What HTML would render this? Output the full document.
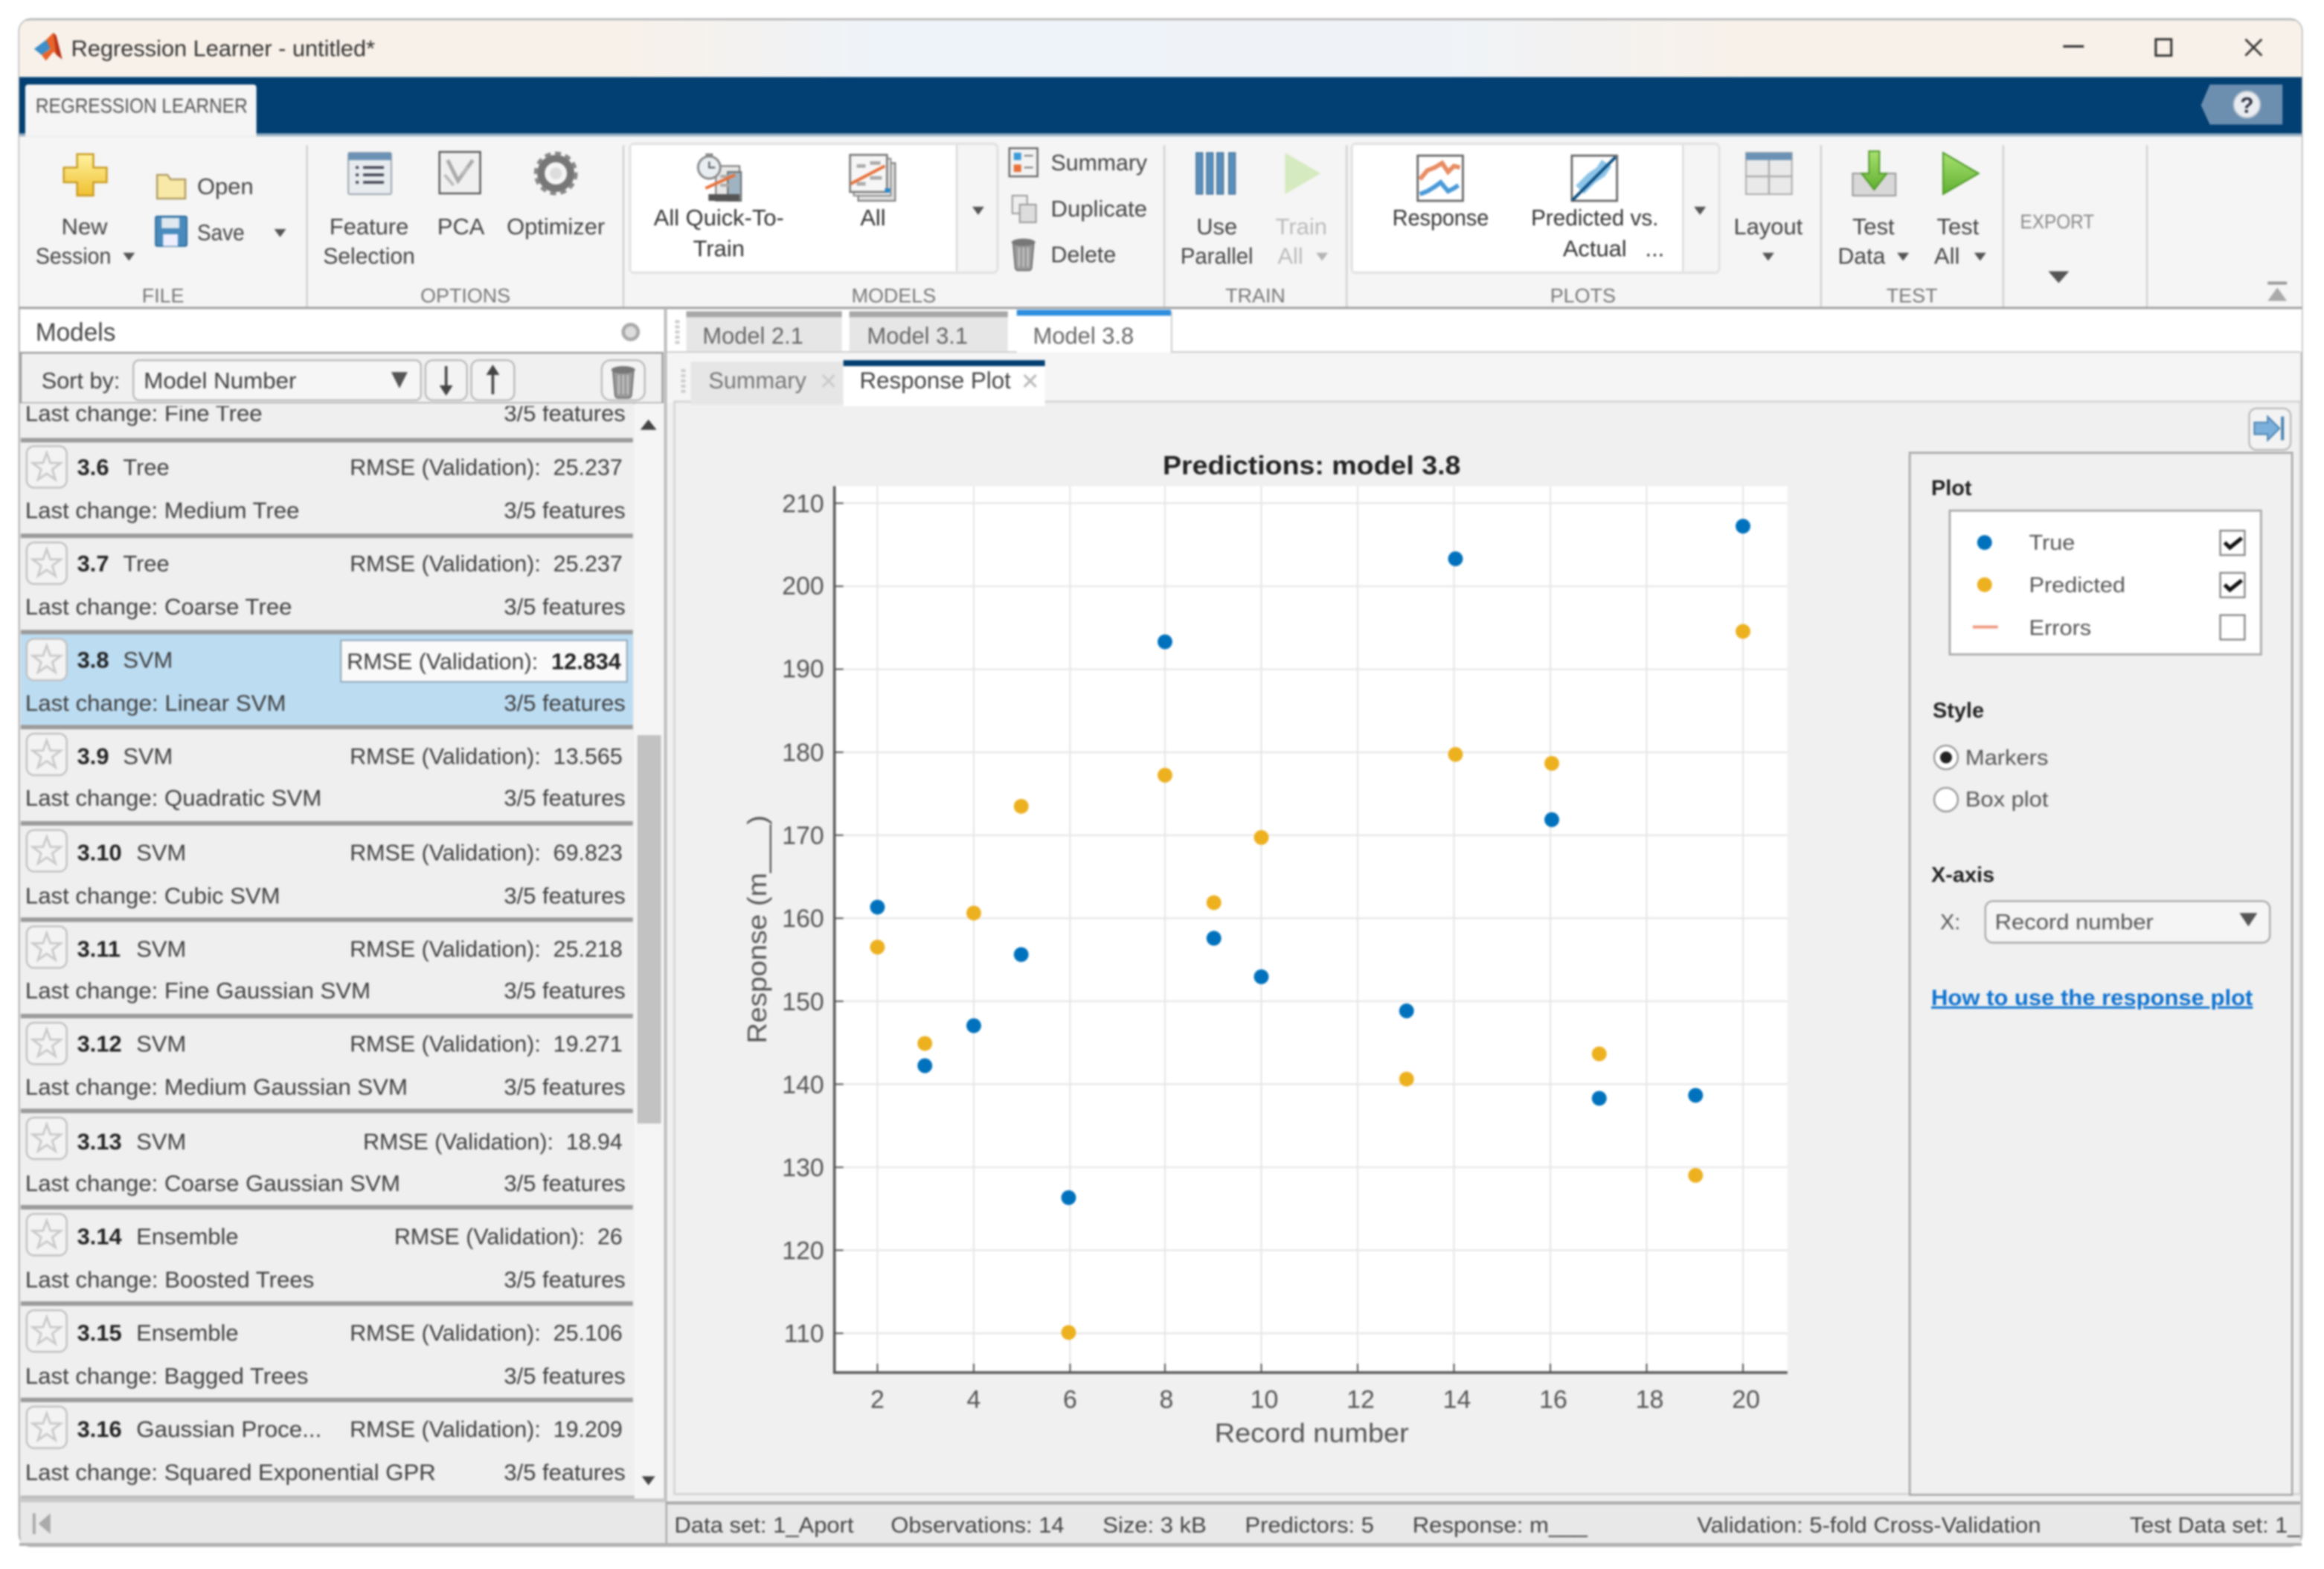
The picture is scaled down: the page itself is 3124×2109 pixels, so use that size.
<!DOCTYPE html>
<html><head><meta charset="utf-8"><title>Regression Learner</title>
<style>
html,body{margin:0;padding:0;background:#fff;width:3124px;height:2109px;overflow:hidden}
svg{display:block;filter:blur(1.2px)}
text{font-family:"Liberation Sans",sans-serif;fill:#3f3f3f;font-size:15.5px;white-space:pre}
.rb{font-size:15.5px;fill:#444}
.sec{font-size:13.5px;fill:#777}
.m{text-anchor:middle}
.e{text-anchor:end}
.b{font-weight:bold;fill:#222}
.ax{font-size:17px;fill:#555}
.st{font-size:15px;fill:#444}
.rp{font-size:14.5px;fill:#555}
.tab{font-size:16px;fill:#666}
</style></head><body>
<svg width="3124" height="2109" viewBox="0 0 1568 1058.56" xmlns="http://www.w3.org/2000/svg">
<defs>
<linearGradient id="tg" x1="0" x2="1" y1="0" y2="0"><stop offset="0" stop-color="#f8f1e9"/><stop offset=".26" stop-color="#f8f1e9"/><stop offset=".38" stop-color="#eef3f9"/><stop offset=".62" stop-color="#eff3f8"/><stop offset=".76" stop-color="#f8f1e9"/><stop offset="1" stop-color="#f8f1e9"/></linearGradient>
<linearGradient id="gold" x1="0" x2="0" y1="0" y2="1"><stop offset="0" stop-color="#fff2a0"/><stop offset="1" stop-color="#f0c030"/></linearGradient>
<linearGradient id="grn" x1="0" x2="0" y1="0" y2="1"><stop offset="0" stop-color="#a8e070"/><stop offset="1" stop-color="#60b030"/></linearGradient>
<g id="star"><rect x="18" y="5" width="27" height="28" rx="5" fill="#f3f3f3" stroke="#c0c0c0" stroke-width="1.2"/><polygon transform="translate(31.5,19.5)" points="0,-10 2.4,-3.2 9.5,-3.1 3.8,1.2 5.9,8.1 0,4 -5.9,8.1 -3.8,1.2 -9.5,-3.1 -2.4,-3.2" fill="none" stroke="#c8c8c8" stroke-width="1.4"/></g>
<polygon id="ar" points="-4,-2.5 4,-2.5 0,3" fill="#555"/>
<g id="can"><path d="M-7,-6 h14 l-1.5,17 a2,2 0 0 1 -2,1.5 h-7 a2,2 0 0 1 -2,-1.5 z" fill="#999" stroke="#666" stroke-width=".8"/><ellipse cx="0" cy="-6.5" rx="8" ry="2.5" fill="#777"/><path d="M-3,-3 v13 M0,-3 v13 M3,-3 v13" stroke="#ccc" stroke-width="1"/></g>
<clipPath id="lc"><rect x="13" y="274" width="415" height="736"/></clipPath>
<clipPath id="wc"><rect x="13" y="13" width="1540" height="1030" rx="8"/></clipPath>
<clipPath id="sc"><rect x="450" y="1013" width="1102" height="29"/></clipPath>
</defs>

<!-- window -->
<rect x="13" y="13" width="1540" height="1030" rx="8" fill="#f0f0f0" stroke="#bbb" stroke-width="1.5"/>
<g clip-path="url(#wc)">
<rect x="13" y="14" width="1540" height="38" fill="url(#tg)"/>
<rect x="13" y="52" width="1540" height="40" fill="#023f72"/>
<rect x="13" y="90" width="1540" height="2" fill="#9ab0c4"/>
<rect x="13" y="92" width="1540" height="115" fill="#f5f5f5"/>
<rect x="13" y="207" width="1540" height="1.6" fill="#a0a0a0"/>
</g>

<!-- title -->
<polygon points="23,33 31,27 35,32 28,37" fill="#3d8ec9"/>
<polygon points="31,27 36,22 42,40 36,35 31,41 28,37 34,33" fill="#e9642a"/>
<polygon points="36,22 38,24 42,40 38,37" fill="#b8341c"/>
<text x="48" y="38" textLength="205" lengthAdjust="spacingAndGlyphs" style="font-size:15.5px;fill:#333">Regression Learner - untitled*</text>
<rect x="1392" y="30.5" width="14" height="1.6" fill="#333"/>
<rect x="1454.5" y="26.5" width="10.5" height="11" fill="none" stroke="#333" stroke-width="1.5"/>
<path d="M1515,26.5 L1526,37.5 M1526,26.5 L1515,37.5" stroke="#333" stroke-width="1.4"/>

<!-- top tab -->
<path d="M17,89 V59 a2,2 0 0 1 2,-2 H171 a2,2 0 0 1 2,2 V92 H17 z" fill="#f5f5f5"/>
<text x="24" y="76" textLength="143" lengthAdjust="spacingAndGlyphs" style="font-size:14px;fill:#555">REGRESSION LEARNER</text>
<polygon points="1491,57 1540,57 1540,84 1491,84 1485,71" fill="#6c8fb0"/>
<circle cx="1516" cy="70.5" r="9" fill="#e9edf1" stroke="#b0bdc9"/>
<text x="1516" y="76" class="m b" style="font-size:15px;fill:#334">?</text>

<!-- separators -->
<g fill="#d0d0d0"><rect x="206.5" y="98" width="1.2" height="109"/><rect x="420" y="98" width="1.2" height="109"/><rect x="785" y="98" width="1.2" height="109"/><rect x="908" y="98" width="1.2" height="109"/><rect x="1228" y="98" width="1.2" height="109"/><rect x="1351" y="98" width="1.2" height="109"/><rect x="1448" y="98" width="1.2" height="109"/></g>

<!-- section labels -->
<g class="sec">
<text class="sec m" x="110" y="204">FILE</text><text class="sec m" x="314" y="204">OPTIONS</text><text class="sec m" x="603" y="204">MODELS</text><text class="sec m" x="847" y="204">TRAIN</text><text class="sec m" x="1068" y="204">PLOTS</text><text class="sec m" x="1290" y="204">TEST</text><text class="sec" x="1363" y="154" textLength="50" lengthAdjust="spacingAndGlyphs" style="fill:#888">EXPORT</text>
</g>

<!-- FILE -->
<path d="M52,104 h11 v9 h9 v10 h-9 v9 h-11 v-9 h-9 v-10 h9 z" fill="url(#gold)" stroke="#c89a20" stroke-width="1.2"/>
<text class="rb m" x="57" y="158">New</text><text class="rb" x="24" y="178" textLength="51" lengthAdjust="spacingAndGlyphs">Session</text><use href="#ar" x="87" y="173"/>
<path d="M106,118 h7 l2,3 h10 v13 h-19 z" fill="#f8e9a8" stroke="#b09a60" stroke-width="1.2"/>
<text class="rb" x="133" y="131" textLength="38" lengthAdjust="spacingAndGlyphs">Open</text>
<rect x="105" y="146" width="21" height="20" rx="1" fill="#4a8bbd" stroke="#2b6a9b"/><rect x="109" y="147" width="12" height="7" fill="#dfe8ef"/><rect x="110" y="158" width="10" height="8" fill="#eef"/>
<text class="rb" x="133" y="162" textLength="32" lengthAdjust="spacingAndGlyphs">Save</text><use href="#ar" x="189" y="157"/>

<!-- OPTIONS -->
<rect x="235" y="103" width="29" height="28" rx="1" fill="#e8ecef" stroke="#9aa4ad"/><rect x="235" y="103" width="29" height="5" fill="#6b92b5"/>
<path d="M240,113 h2 M245,113 h14 M240,118 h2 M245,118 h14 M240,123 h2 M245,123 h14" stroke="#445" stroke-width="1.8"/>
<text class="rb m" x="249" y="158">Feature</text><text class="rb m" x="249" y="178" textLength="62" lengthAdjust="spacingAndGlyphs">Selection</text>
<rect x="296.5" y="102.5" width="27.5" height="28" fill="#f0f0f0" stroke="#555" stroke-width="1.2"/>
<path d="M302,108 L309,122 L319,108" fill="none" stroke="#aaa" stroke-width="2.5"/><path d="M300,118 l6,7 M311,118 l5,-5" stroke="#bbb" stroke-width="2"/>
<text class="rb m" x="311" y="158">PCA</text>
<circle cx="375" cy="117" r="10" fill="none" stroke="#777" stroke-width="5"/><circle cx="375" cy="117" r="13.5" fill="none" stroke="#888" stroke-width="2.5" stroke-dasharray="4 3"/><circle cx="375" cy="117" r="4" fill="#ddd"/>
<text class="rb m" x="375" y="158">Optimizer</text>

<!-- MODELS gallery -->
<rect x="425" y="97" width="248" height="87" rx="3" fill="#f5f5f5" stroke="#e2e2e2" stroke-width="1.6"/>
<rect x="426" y="98" width="219" height="85" fill="#fff"/><rect x="645" y="98" width="1" height="85" fill="#d4d4d4"/>
<use href="#ar" x="660" y="142"/>
<!-- all quick icon -->
<rect x="483" y="112" width="16" height="23.5" fill="#e8e8e8" stroke="#777"/>
<rect x="491" y="116" width="9" height="19.5" fill="#9fb4c2" stroke="#666"/>
<rect x="478" y="131" width="21" height="4.5" fill="#555"/>
<path d="M486,119 h7 M486,125 h7" stroke="#aaa" stroke-width="2"/>
<path d="M476,127 L496,118" stroke="#e8703a" stroke-width="2"/>
<circle cx="478.5" cy="113" r="7.5" fill="#e8eef2" stroke="#8a8a8a" stroke-width="1.5"/><rect x="476" y="103.5" width="5" height="2.5" fill="#888"/><path d="M478.5,109 v4 h4" fill="none" stroke="#666" stroke-width="1.2"/>
<text class="rb m" x="485" y="152" style="fill:#333">All Quick-To-</text><text class="rb m" x="485" y="173" style="fill:#333">Train</text>
<!-- all icon -->
<rect x="579" y="110" width="25" height="25.5" fill="#ddd" stroke="#777"/><rect x="576" y="107" width="25" height="25" fill="#eee" stroke="#888"/>
<rect x="573.5" y="104.5" width="25" height="25" fill="#f6f6f6" stroke="#777" stroke-width="1.3"/>
<path d="M578,112 h6 M587,110 h7 M578,124 h6 M587,120 h8" stroke="#aaa" stroke-width="2.4"/>
<path d="M574,124 L597,112" stroke="#e8703a" stroke-width="2"/>
<rect x="597" y="127" width="3.5" height="3" fill="#2b88c8"/>
<text class="rb m" x="589" y="152" style="fill:#333">All</text>
<rect x="681" y="100" width="19" height="19" fill="#f3f3f3" stroke="#666" stroke-width="1.2"/><rect x="684" y="103" width="5" height="5" fill="#3c9ad8"/><rect x="684" y="111" width="5" height="5" fill="#e8703a"/><path d="M691,105 h6 M691,113 h6" stroke="#777"/>
<text class="rb" x="709" y="115" textLength="65" lengthAdjust="spacingAndGlyphs">Summary</text>
<rect x="683" y="132" width="10" height="12" fill="#eee" stroke="#999"/><rect x="688" y="138" width="11" height="12" fill="#ddd" stroke="#999"/>
<text class="rb" x="709" y="146" textLength="65" lengthAdjust="spacingAndGlyphs">Duplicate</text>
<use href="#can" x="690.5" y="170"/>
<text class="rb" x="709" y="177" textLength="44" lengthAdjust="spacingAndGlyphs">Delete</text>

<!-- TRAIN -->
<g fill="#5b8fbb" stroke="#3b6a92" stroke-width=".6"><rect x="807" y="103" width="4.5" height="28"/><rect x="814" y="103" width="4.5" height="28"/><rect x="821" y="103" width="4.5" height="28"/><rect x="829" y="103" width="4.5" height="28"/></g>
<text class="rb m" x="821" y="158">Use</text><text class="rb m" x="821" y="178" textLength="49" lengthAdjust="spacingAndGlyphs">Parallel</text>
<polygon points="867,103 891,117 867,131" fill="#d6eac0"/>
<text class="rb m" x="878" y="158" style="fill:#bbb">Train</text><text class="rb" x="862" y="178" style="fill:#bbb">All</text><use href="#ar" x="892" y="173" opacity=".4"/>

<!-- PLOTS gallery -->
<rect x="912" y="97" width="248" height="87" rx="3" fill="#f5f5f5" stroke="#e2e2e2" stroke-width="1.6"/>
<rect x="913" y="98" width="222" height="85" fill="#fff"/><rect x="1135" y="98" width="1" height="85" fill="#d4d4d4"/>
<use href="#ar" x="1147" y="142"/>
<rect x="956.5" y="105" width="30.5" height="30.5" fill="#fff" stroke="#666" stroke-width="1.4"/>
<path d="M958,121 l5,-6 5,-2 5,-3 4,6 4,-4 4,1" fill="none" stroke="#e88c62" stroke-width="3"/><path d="M958,131 l5,-2 5,-3 4,-3 5,6 4,-2 3,-2" fill="none" stroke="#4a9ad8" stroke-width="3"/>
<text class="rb m" x="972" y="152" textLength="65" lengthAdjust="spacingAndGlyphs" style="fill:#333">Response</text>
<rect x="1060.5" y="105" width="30.5" height="30.5" fill="#fff" stroke="#666" stroke-width="1.4"/>
<path d="M1066,128 l8,-8 6,-4 4,-6" fill="none" stroke="#8cc4e8" stroke-width="8"/><path d="M1061,135 L1090,106" stroke="#0f4f82" stroke-width="2"/>
<text class="rb m" x="1076" y="152" textLength="86" lengthAdjust="spacingAndGlyphs" style="fill:#333">Predicted vs.</text><text class="rb m" x="1076" y="173" style="fill:#333">Actual</text><text class="rb" x="1110" y="173" style="fill:#333">...</text>
<rect x="1178" y="103" width="31" height="28" fill="#e9e9e9" stroke="#aaa"/><rect x="1178" y="103" width="31" height="5" fill="#6b92b5"/><path d="M1193.5,108 v23 M1178,119 h31" stroke="#aaa" stroke-width="1.2"/>
<text class="rb m" x="1193" y="158">Layout</text><use href="#ar" x="1193" y="173"/>

<!-- TEST -->
<rect x="1250" y="117" width="29" height="15" fill="#d8d8d8" stroke="#999"/>
<path d="M1261,102 h7 v15 h5 l-8.5,11 -8.5,-11 h5 z" fill="url(#grn)" stroke="#4f9a28" stroke-width="1"/>
<text class="rb m" x="1264" y="158">Test</text><text class="rb" x="1240" y="178" textLength="32" lengthAdjust="spacingAndGlyphs">Data</text><use href="#ar" x="1284" y="173"/>
<polygon points="1311,103 1335,117 1311,131" fill="url(#grn)" stroke="#4f9a28"/>
<text class="rb m" x="1321" y="158">Test</text><text class="rb" x="1305" y="178">All</text><use href="#ar" x="1336" y="173"/>
<polygon points="1382,183 1396,183 1389,191" fill="#555"/>
<rect x="1530" y="190" width="13" height="2" fill="#999"/><polygon points="1536.5,194 1543,203 1530,203" fill="#aaa"/>

<!-- Models panel -->
<rect x="13.5" y="208.5" width="435" height="29" fill="#fff"/>
<text x="24" y="230" textLength="54" lengthAdjust="spacingAndGlyphs" style="font-size:17px;fill:#444">Models</text>
<circle cx="425.5" cy="224" r="5" fill="#ddd" stroke="#aaa" stroke-width="2.4"/>
<rect x="14" y="238" width="433" height="34" fill="#f0f0f0" stroke="#999" stroke-width="1.2"/>
<text x="28" y="262" textLength="53" lengthAdjust="spacingAndGlyphs">Sort by:</text>
<rect x="90" y="243" width="194" height="27" rx="4" fill="#f6f6f6" stroke="#bbb" stroke-width="1.2"/>
<text x="97" y="262" textLength="103" lengthAdjust="spacingAndGlyphs">Model Number</text>
<polygon points="264,251 275,251 269.5,262" fill="#555"/>
<rect x="287" y="243" width="28" height="27" rx="5" fill="#f3f3f3" stroke="#bbb" stroke-width="1.2"/>
<path d="M301,247 v16" stroke="#444" stroke-width="1.8"/><polygon points="296.5,260 305.5,260 301,267" fill="#444"/>
<rect x="318" y="243" width="29" height="27" rx="5" fill="#f3f3f3" stroke="#bbb" stroke-width="1.2"/>
<path d="M332.5,252 v14" stroke="#444" stroke-width="1.8"/><polygon points="328,253 337,253 332.5,246" fill="#444"/>
<rect x="406" y="243" width="29" height="27" rx="6" fill="#f3f3f3" stroke="#bbb" stroke-width="1.2"/>
<use href="#can" x="420.5" y="256"/>

<!-- list -->
<rect x="13.5" y="272" width="414" height="738" fill="#efefef"/>
<rect x="428" y="272" width="21" height="741" fill="#f5f5f5"/>
<polygon points="437.5,283 443,290 432,290" fill="#444"/>
<rect x="430" y="496" width="16" height="262" fill="#c2c2c2"/>
<polygon points="433,996 442,996 437.5,1002" fill="#444"/>
<g clip-path="url(#lc)">
<text x="17" y="284" textLength="160" lengthAdjust="spacingAndGlyphs">Last change: Fine Tree</text><text x="340" y="284" textLength="82" lengthAdjust="spacingAndGlyphs">3/5 features</text>
<g fill="#9a9a9a"><rect x="14" y="295.5" width="413" height="3"/><rect x="14" y="360" width="413" height="3"/><rect x="14" y="425" width="413" height="3"/><rect x="14" y="489" width="413" height="3"/><rect x="14" y="554" width="413" height="3"/><rect x="14" y="619" width="413" height="3"/><rect x="14" y="684" width="413" height="3"/><rect x="14" y="748" width="413" height="3"/><rect x="14" y="813" width="413" height="3"/><rect x="14" y="878" width="413" height="3"/><rect x="14" y="943" width="413" height="3"/></g>
<rect x="14" y="428" width="413" height="61" fill="#bcdcf2"/>

<g transform="translate(0,296)"><use href="#star"/><text class="b" x="52" y="24.5">3.6</text><text x="83" y="24.5">Tree</text><text x="236" y="24.5" textLength="184" lengthAdjust="spacingAndGlyphs">RMSE (Validation):  25.237</text><text x="17" y="53.5" textLength="185" lengthAdjust="spacingAndGlyphs">Last change: Medium Tree</text><text x="340" y="53.5" textLength="82" lengthAdjust="spacingAndGlyphs">3/5 features</text></g>
<g transform="translate(0,361)"><use href="#star"/><text class="b" x="52" y="24.5">3.7</text><text x="83" y="24.5">Tree</text><text x="236" y="24.5" textLength="184" lengthAdjust="spacingAndGlyphs">RMSE (Validation):  25.237</text><text x="17" y="53.5" textLength="180" lengthAdjust="spacingAndGlyphs">Last change: Coarse Tree</text><text x="340" y="53.5" textLength="82" lengthAdjust="spacingAndGlyphs">3/5 features</text></g>
<g transform="translate(0,426)"><use href="#star"/><text class="b" x="52" y="24.5">3.8</text><text x="83" y="24.5">SVM</text><rect x="230" y="6" width="193" height="28" fill="#fafafa" stroke="#8fa8bb" stroke-width="1"/><text x="234" y="25.5" textLength="129" lengthAdjust="spacingAndGlyphs">RMSE (Validation):</text><text class="b" x="372" y="25.5" textLength="47" lengthAdjust="spacingAndGlyphs">12.834</text><text x="17" y="53.5" textLength="176" lengthAdjust="spacingAndGlyphs">Last change: Linear SVM</text><text x="340" y="53.5" textLength="82" lengthAdjust="spacingAndGlyphs">3/5 features</text></g>
<g transform="translate(0,490)"><use href="#star"/><text class="b" x="52" y="25.5">3.9</text><text x="83" y="25.5">SVM</text><text x="236" y="25.5" textLength="184" lengthAdjust="spacingAndGlyphs">RMSE (Validation):  13.565</text><text x="17" y="53.5" textLength="200" lengthAdjust="spacingAndGlyphs">Last change: Quadratic SVM</text><text x="340" y="53.5" textLength="82" lengthAdjust="spacingAndGlyphs">3/5 features</text></g>
<g transform="translate(0,555)"><use href="#star"/><text class="b" x="52" y="25.5">3.10</text><text x="92" y="25.5">SVM</text><text x="236" y="25.5" textLength="184" lengthAdjust="spacingAndGlyphs">RMSE (Validation):  69.823</text><text x="17" y="54.5" textLength="172" lengthAdjust="spacingAndGlyphs">Last change: Cubic SVM</text><text x="340" y="54.5" textLength="82" lengthAdjust="spacingAndGlyphs">3/5 features</text></g>
<g transform="translate(0,620)"><use href="#star"/><text class="b" x="52" y="25.5">3.11</text><text x="92" y="25.5">SVM</text><text x="236" y="25.5" textLength="184" lengthAdjust="spacingAndGlyphs">RMSE (Validation):  25.218</text><text x="17" y="53.5" textLength="233" lengthAdjust="spacingAndGlyphs">Last change: Fine Gaussian SVM</text><text x="340" y="53.5" textLength="82" lengthAdjust="spacingAndGlyphs">3/5 features</text></g>
<g transform="translate(0,685)"><use href="#star"/><text class="b" x="52" y="24.5">3.12</text><text x="92" y="24.5">SVM</text><text x="236" y="24.5" textLength="184" lengthAdjust="spacingAndGlyphs">RMSE (Validation):  19.271</text><text x="17" y="53.5" textLength="258" lengthAdjust="spacingAndGlyphs">Last change: Medium Gaussian SVM</text><text x="340" y="53.5" textLength="82" lengthAdjust="spacingAndGlyphs">3/5 features</text></g>
<g transform="translate(0,749)"><use href="#star"/><text class="b" x="52" y="26.5">3.13</text><text x="92" y="26.5">SVM</text><text x="245" y="26.5" textLength="175" lengthAdjust="spacingAndGlyphs">RMSE (Validation):  18.94</text><text x="17" y="54.5" textLength="253" lengthAdjust="spacingAndGlyphs">Last change: Coarse Gaussian SVM</text><text x="340" y="54.5" textLength="82" lengthAdjust="spacingAndGlyphs">3/5 features</text></g>
<g transform="translate(0,814)"><use href="#star"/><text class="b" x="52" y="25.5">3.14</text><text x="92" y="25.5">Ensemble</text><text x="266" y="25.5" textLength="154" lengthAdjust="spacingAndGlyphs">RMSE (Validation):  26</text><text x="17" y="54.5" textLength="195" lengthAdjust="spacingAndGlyphs">Last change: Boosted Trees</text><text x="340" y="54.5" textLength="82" lengthAdjust="spacingAndGlyphs">3/5 features</text></g>
<g transform="translate(0,879)"><use href="#star"/><text class="b" x="52" y="25.5">3.15</text><text x="92" y="25.5">Ensemble</text><text x="236" y="25.5" textLength="184" lengthAdjust="spacingAndGlyphs">RMSE (Validation):  25.106</text><text x="17" y="54.5" textLength="191" lengthAdjust="spacingAndGlyphs">Last change: Bagged Trees</text><text x="340" y="54.5" textLength="82" lengthAdjust="spacingAndGlyphs">3/5 features</text></g>
<g transform="translate(0,944)"><use href="#star"/><text class="b" x="52" y="25.5">3.16</text><text x="92" y="25.5" textLength="125" lengthAdjust="spacingAndGlyphs">Gaussian Proce...</text><text x="236" y="25.5" textLength="184" lengthAdjust="spacingAndGlyphs">RMSE (Validation):  19.209</text><text x="17" y="54.5" textLength="277" lengthAdjust="spacingAndGlyphs">Last change: Squared Exponential GPR</text><text x="340" y="54.5" textLength="82" lengthAdjust="spacingAndGlyphs">3/5 features</text></g>
</g>
<rect x="14" y="1009" width="414" height="2" fill="#bbb"/>

<!-- right tabs -->
<rect x="450" y="208.5" width="1103" height="29" fill="#fff"/>
<rect x="448" y="208" width="2" height="806" fill="#bdbdbd"/>
<rect x="450" y="237" width="1102" height="1.2" fill="#ccc"/>
<rect x="450" y="238" width="1102" height="34" fill="#f5f5f5"/>
<path d="M457,216 v16" stroke="#ccc" stroke-width="3" stroke-dasharray="2 1.5"/>
<rect x="463" y="210" width="105" height="27" fill="#e6e6e6"/><rect x="463" y="210" width="105" height="4" fill="#a8a8a8"/>
<text class="tab" x="474" y="232" textLength="68" lengthAdjust="spacingAndGlyphs">Model 2.1</text>
<rect x="573" y="210" width="107" height="27" fill="#e6e6e6"/><rect x="573" y="210" width="107" height="4" fill="#a8a8a8"/>
<text class="tab" x="585" y="232" textLength="68" lengthAdjust="spacingAndGlyphs">Model 3.1</text>
<rect x="686" y="210" width="104" height="28" fill="#fff"/><rect x="686" y="209" width="104" height="4" fill="#2f8fdf"/>
<rect x="790" y="210" width="1" height="28" fill="#ccc"/>
<text class="tab" x="697" y="232" textLength="68" lengthAdjust="spacingAndGlyphs">Model 3.8</text>

<!-- plot panel -->
<rect x="455" y="271" width="1097" height="737" fill="#f0f0f0" stroke="#d4d4d4" stroke-width="1.4"/>
<path d="M461,249 v16" stroke="#ccc" stroke-width="3" stroke-dasharray="2 1.5"/>
<rect x="466" y="244" width="103" height="29" fill="#e6e6e6"/>
<text class="tab" x="478" y="262" textLength="66" lengthAdjust="spacingAndGlyphs" style="fill:#777">Summary</text>
<path d="M555,253 l8,8 M563,253 l-8,8" stroke="#ccc" stroke-width="1.6"/>
<rect x="569" y="244" width="136" height="30" fill="#fff"/><rect x="569" y="243" width="136" height="4" fill="#023f72"/>
<text class="tab" x="580" y="262" textLength="102" lengthAdjust="spacingAndGlyphs" style="fill:#444">Response Plot</text>
<path d="M691,253 l8,8 M699,253 l-8,8" stroke="#bbb" stroke-width="1.6"/>

<rect x="1517.5" y="275.5" width="28" height="28" rx="5" fill="#f3f3f3" stroke="#bbb" stroke-width="1.2"/>
<polygon points="1521,285 1530,285 1530,281 1538,289 1530,297 1530,293 1521,293" fill="#7bb0dc" stroke="#4a82b0"/><rect x="1539" y="281" width="2" height="16" fill="#4a82b0"/>

<!-- Chart -->
<text x="885" y="320" class="m b" textLength="201" lengthAdjust="spacingAndGlyphs" style="font-size:17.5px;fill:#222">Predictions: model 3.8</text>
<rect x="563" y="328" width="643" height="598" fill="#fff"/>
<g stroke="#e6e6e6" stroke-width="1.1">
<path d="M563,339.5 H1206 M563,395.5 H1206 M563,451.5 H1206 M563,507.5 H1206 M563,563.5 H1206 M563,619.5 H1206 M563,675.5 H1206 M563,731.5 H1206 M563,787.5 H1206 M563,843.5 H1206 M563,899.5 H1206"/>
<path d="M592,328 V926 M657,328 V926 M722,328 V926 M786,328 V926 M851,328 V926 M916,328 V926 M981,328 V926 M1046,328 V926 M1111,328 V926 M1176,328 V926"/>
</g>
<path d="M563,328 V926 H1206" fill="none" stroke="#5a5a5a" stroke-width="1.8"/>
<g stroke="#555" stroke-width="1">
<path d="M563,339.5 h6 M563,395.5 h6 M563,451.5 h6 M563,507.5 h6 M563,563.5 h6 M563,619.5 h6 M563,675.5 h6 M563,731.5 h6 M563,787.5 h6 M563,843.5 h6 M563,899.5 h6"/>
<path d="M592,926 v-6 M657,926 v-6 M722,926 v-6 M786,926 v-6 M851,926 v-6 M916,926 v-6 M981,926 v-6 M1046,926 v-6 M1111,926 v-6 M1176,926 v-6"/>
</g>
<text class="ax e" x="556" y="345.5">210</text><text class="ax e" x="556" y="401">200</text><text class="ax e" x="556" y="457">190</text><text class="ax e" x="556" y="513.5">180</text><text class="ax e" x="556" y="569.5">170</text><text class="ax e" x="556" y="625.5">160</text><text class="ax e" x="556" y="681.5">150</text><text class="ax e" x="556" y="737.5">140</text><text class="ax e" x="556" y="793.5">130</text><text class="ax e" x="556" y="849.5">120</text><text class="ax e" x="556" y="905.5">110</text>
<text class="ax m" x="592" y="950">2</text><text class="ax m" x="657" y="950">4</text><text class="ax m" x="722" y="950">6</text><text class="ax m" x="787" y="950">8</text><text class="ax m" x="853" y="950">10</text><text class="ax m" x="918" y="950">12</text><text class="ax m" x="983" y="950">14</text><text class="ax m" x="1048" y="950">16</text><text class="ax m" x="1113" y="950">18</text><text class="ax m" x="1178" y="950">20</text>
<text x="885" y="973" class="m" textLength="131" lengthAdjust="spacingAndGlyphs" style="font-size:18px;fill:#555">Record number</text>
<text transform="translate(517,627) rotate(-90)" class="m" textLength="154" lengthAdjust="spacingAndGlyphs" style="font-size:18px;fill:#555">Response (m___)</text>

<g fill="#0072bd">
<circle cx="592" cy="612" r="5"/><circle cx="624" cy="719" r="5"/><circle cx="657" cy="692" r="5"/><circle cx="689" cy="644" r="5"/><circle cx="721" cy="808" r="5"/><circle cx="786" cy="433" r="5"/><circle cx="819" cy="633" r="5"/><circle cx="851" cy="659" r="5"/><circle cx="949" cy="682" r="5"/><circle cx="982" cy="377" r="5"/><circle cx="1047" cy="553" r="5"/><circle cx="1079" cy="741" r="5"/><circle cx="1144" cy="739" r="5"/><circle cx="1176" cy="355" r="5"/>
</g>
<g fill="#edb120">
<circle cx="592" cy="639" r="5"/><circle cx="624" cy="704" r="5"/><circle cx="657" cy="616" r="5"/><circle cx="689" cy="544" r="5"/><circle cx="721" cy="899" r="5"/><circle cx="786" cy="523" r="5"/><circle cx="819" cy="609" r="5"/><circle cx="851" cy="565" r="5"/><circle cx="949" cy="728" r="5"/><circle cx="982" cy="509" r="5"/><circle cx="1047" cy="515" r="5"/><circle cx="1079" cy="711" r="5"/><circle cx="1144" cy="793" r="5"/><circle cx="1176" cy="426" r="5"/>
</g>

<!-- side panel -->
<rect x="1288.5" y="305.5" width="258" height="703" fill="#f0f0f0" stroke="#aaa" stroke-width="1.4"/>
<text class="b" x="1303" y="334" style="font-size:14.5px">Plot</text>
<rect x="1315.5" y="344.5" width="210" height="97" fill="#fff" stroke="#aaa" stroke-width="1.4"/>
<circle cx="1339" cy="366" r="5" fill="#0072bd"/><circle cx="1339" cy="394.5" r="5" fill="#edb120"/><rect x="1331" y="422" width="17" height="2" fill="#ee9a80"/>
<text class="rp" x="1369" y="371" textLength="31" lengthAdjust="spacingAndGlyphs">True</text><text class="rp" x="1369" y="399.5" textLength="65" lengthAdjust="spacingAndGlyphs">Predicted</text><text class="rp" x="1369" y="428.5" textLength="42" lengthAdjust="spacingAndGlyphs">Errors</text>
<g fill="#fff" stroke="#888" stroke-width="1.2"><rect x="1498" y="358" width="16.5" height="16.5"/><rect x="1498" y="386.5" width="16.5" height="16.5"/><rect x="1498" y="415" width="16.5" height="16.5"/></g>
<path d="M1501,366 l3.5,3.5 l8,-6.5 M1501,394.5 l3.5,3.5 l8,-6.5" fill="none" stroke="#111" stroke-width="2.6"/>
<text class="b" x="1304" y="484" style="font-size:14.5px">Style</text>
<circle cx="1313" cy="511" r="8" fill="#fff" stroke="#999" stroke-width="1.2"/><circle cx="1313" cy="511" r="4" fill="#222"/>
<circle cx="1313" cy="539.5" r="8" fill="#fff" stroke="#999" stroke-width="1.2"/>
<text class="rp" x="1326" y="516" textLength="56" lengthAdjust="spacingAndGlyphs">Markers</text><text class="rp" x="1326" y="544" textLength="56" lengthAdjust="spacingAndGlyphs">Box plot</text>
<text class="b" x="1303" y="595" style="font-size:14.5px">X-axis</text>
<text class="rp" x="1309" y="627">X:</text>
<rect x="1339.5" y="608" width="192" height="28" rx="5" fill="#f5f5f5" stroke="#aaa" stroke-width="1.2"/>
<text class="rp" x="1346" y="627" textLength="107" lengthAdjust="spacingAndGlyphs">Record number</text>
<polygon points="1511,616 1523,616 1517,625" fill="#555"/>
<text x="1303" y="678" textLength="217" lengthAdjust="spacingAndGlyphs" style="font-size:15px;fill:#0e72d0;text-decoration:underline;font-weight:bold">How to use the response plot</text>

<!-- status -->
<rect x="14" y="1013" width="1538" height="29" fill="#e8e8e8"/>
<rect x="14" y="1011" width="435" height="2.5" fill="#c8c8c8"/>
<rect x="449" y="1013" width="1103" height="2" fill="#aaa"/>
<rect x="449" y="1013" width="1.2" height="29" fill="#aaa"/>
<rect x="22" y="1021" width="2" height="14" fill="#aaa"/><polygon points="34,1021 34,1035 26,1028" fill="#aaa"/>
<rect x="13" y="1041" width="1540" height="2" fill="#b0b0b0"/>
<g clip-path="url(#sc)">
<text class="st" x="455" y="1034" textLength="121" lengthAdjust="spacingAndGlyphs">Data set: 1_Aport</text>
<text class="st" x="601" y="1034" textLength="117" lengthAdjust="spacingAndGlyphs">Observations: 14</text>
<text class="st" x="744" y="1034" textLength="70" lengthAdjust="spacingAndGlyphs">Size: 3 kB</text>
<text class="st" x="840" y="1034" textLength="87" lengthAdjust="spacingAndGlyphs">Predictors: 5</text>
<text class="st" x="953" y="1034" textLength="118" lengthAdjust="spacingAndGlyphs">Response: m___</text>
<text class="st" x="1145" y="1034" textLength="232" lengthAdjust="spacingAndGlyphs">Validation: 5-fold Cross-Validation</text>
<text class="st" x="1437" y="1034" textLength="115" lengthAdjust="spacingAndGlyphs">Test Data set: 1_</text>
</g>
</svg>
</body></html>
